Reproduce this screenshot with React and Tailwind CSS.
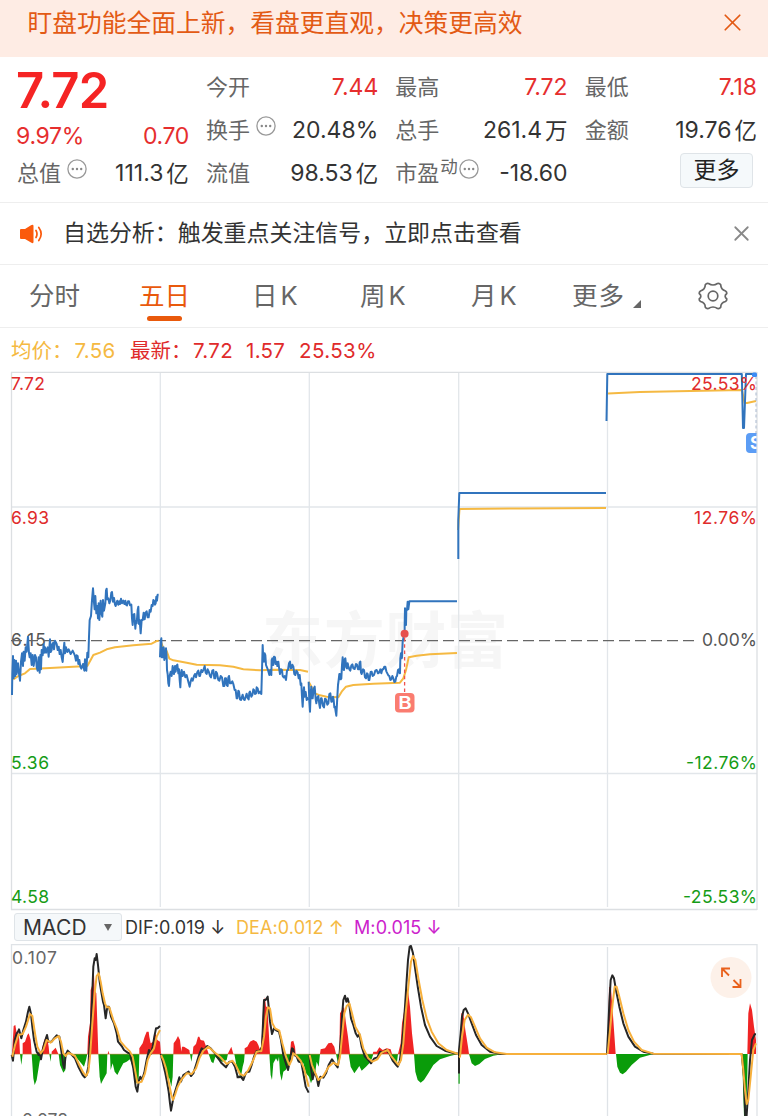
import { X } from "lucide-react";

const QUOTES = [
  [
    { label: "今开", value: "7.44", red: true },
    { label: "换手", value: "20.48%", info: true },
    { label: "流值", value: "98.53", unit: "亿" },
  ],
  [
    { label: "最高", value: "7.72", red: true },
    { label: "总手", value: "261.4", unit: "万" },
    { label: "市盈", sup: "动", value: "-18.60", info: true },
  ],
  [
    { label: "最低", value: "7.18", red: true },
    { label: "金额", value: "19.76", unit: "亿" },
  ],
];

const PRICE_LABELS = [
  { price: "7.72", rate: "25.53%", y: 389.5, color: "#e02b2b", w: 34, rw: 66 },
  { price: "6.93", rate: "12.76%", y: 523.5, color: "#e02b2b", w: 38, rw: 63 },
  { price: "6.15", rate: "0.00%", y: 646, color: "#555555", w: 35, rw: 55 },
  { price: "5.36", rate: "-12.76%", y: 768.5, color: "#169c16", w: 38, rw: 71 },
  { price: "4.58", rate: "-25.53%", y: 902.5, color: "#169c16", w: 38, rw: 74 },
];

// left: three units per pixel from x = 0, mid: from x = 220
const PRICE_LEFT = [
  "36,375 37,310 39,258 41,325 43,270 46,318 48,272 50,312 54,280 57,310 60,332 63,275 66,250 69,288 71,245 74,272 77,232 80,245 84,200 87,250 89,262 92,250 95,285 98,255 101,288 105,255 108,262 110,290 113,302 116,262 119,308 121,255 123,298 125,240 128,256 131,222 133,248 135,232 138,248 143,232 146,260 150,208 152,246 155,240 157,222 160,218 162,238 165,212 170,222 173,240 176,230 179,252 182,240 185,262 188,276 191,238 193,218 195,250 198,232 202,246 206,238 212,252 218,242 222,250 225,258 228,272 230,256 233,258 235,282 238,270 241,290 244,296 249,282 253,302 255,268 257,290 259,302 262,248 265,262 267,200 269,150 273,138 276,90 279,55 282,98 284,118 286,78 289,130 292,108 294,145 296,100 298,150 302,92 304,128 307,140 309,90 312,122 316,100 318,62 320,56 322,88 325,85 328,100 331,92 334,68 336,66 339,95 342,84 345,104 347,108 352,92 355,104 358,94 360,102 363,86 366,100 370,92 373,102 376,92 378,104 381,106 384,94 387,94 390,106 394,104 396,145 398,165 400,135 403,132 406,176 408,152 410,160 413,120 415,110 417,162 419,150 422,190 425,150 428,150 431,128 434,148 437,128 440,124 443,142 446,142 449,120 452,125 455,105 458,108 460,90 462,92 465,104 467,100 469,80 471,92 473,74 476,74",
  "480,262 482,215 484,205 485,262 487,262 489,235 491,232 493,270 495,262 498,235 500,262 501,300 503,312 505,340 507,348 509,318 512,305 515,318 518,288 520,308 522,312 525,288 527,305 529,288 532,284 535,310 537,298 539,330 541,352 543,310 545,300 548,318 552,305 556,322 560,315 565,335 569,350 572,334 575,325 578,332 582,318 585,312 588,322 592,306 595,302 598,318 600,318 604,300 607,306 611,298 614,288 617,308 620,312 623,298 626,304 630,318 633,322 637,302 640,300 643,325 646,325 648,305 651,310 655,330 658,332 662,318 666,322 670,348 673,348 675,325 678,325 680,345 683,348 685,322 687,318 690,340 693,340 697,334 700,342 704,360 707,360 710,385 712,385 715,362 717,365 720,388 723,390 728,374 731,388 734,390 740,371 743,384 746,388 748,368 750,365 754,380 757,375 760,358 762,360 765,372 768,370 770,352 773,355 776,370 780,365 784,372 786,300 788,225 790,268 792,275 794,250 796,255 798,285 800,290 804,300 808,315 811,300 814,315 815,270 817,265 820,285 822,260 825,262 827,282 830,275 832,288 835,275 838,300 840,312 843,298 846,300 848,318 851,322 854,318 858,330 861,302 864,300 867,280 870,275 872,295 874,295 877,284 880,290 883,312 886,315 889,302 893,308 896,325 899,315 902,345 904,340 906,380 908,410 910,372 912,352 914,380 917,366 920,390 922,384 925,390",
];
const PRICE_MID =
  "266,335 268,395 270,425 272,370 274,350 276,385 278,385 281,356 284,350 287,388 289,400 292,382 295,378 298,404 300,414 303,385 305,385 309,408 312,412 315,386 318,388 322,404 325,400 328,372 331,370 334,395 336,395 339,380 341,390 343,412 345,410 347,425 349,437 351,400 352,380 354,345 356,330 358,312 360,312 362,328 364,325 366,285 368,262 370,298 372,300 374,268 376,265 379,292 381,295 383,280 385,288 388,298 391,302 394,286 397,283 400,295 404,297 408,282 411,284 414,298 417,298 419,278 421,275 423,308 425,312 429,298 432,300 435,322 438,325 441,310 443,312 446,330 448,330 452,306 455,305 458,318 462,315 466,302 470,300 474,310 477,308 481,298 484,310 487,298 490,298 493,290 496,290 499,304 502,310 505,316 508,318 511,330 514,328 517,318 520,325 523,336 526,335 529,320 531,318 534,300 536,298 539,310 540,310 541,265 543,250 545,265 546,262 548,215 550,205 554,190 554,165 555,115 556,160 558,165 559,118 561,120 563,95 565,118 568,94 711,94";
const AVG_LEFT = [
  "40,328 55,318 75,310 90,297 150,294 262,288 272,270 280,255 300,248 320,238 345,232 400,226 455,221 468,214 476,212",
  "483,215 490,235 500,243 508,266 520,271 560,278 590,284 660,286 700,290 730,298 780,301 820,299 900,300 924,305",
];
const AVG_MID =
  "266,335 275,352 285,370 300,376 320,380 355,382 365,365 378,350 400,345 460,341 540,338 550,325 558,300 566,262 590,257 630,253 711,249";

const MACD = [
  {
    x: 0,
    green:
      "60,492 64,525 68,492 95,492 100,565 104,585 110,570 118,520 122,500 124,492 148,492 152,515 154,492 176,492 180,525 190,548 196,540 199,492 220,492 240,515 252,530 258,510 262,492 295,492 299,560 303,582 309,570 320,550 322,492 330,492 332,540 338,520 344,545 352,555 362,535 370,520 380,515 390,508 398,530 404,570 410,580 416,570 418,492 484,492 492,520 500,560 508,565 514,590 518,560 520,492 570,492 574,515 578,492 626,492 634,515 640,520 646,500 655,510 668,515 680,510 684,492 703,492 710,530 716,550 722,565 728,530 732,515 734,492",
    red: "36,492 41,408 46,405 50,430 56,430 58,450 60,492 68,492 68,460 75,455 82,435 86,430 92,450 95,492 124,492 126,475 133,450 140,435 146,470 148,492 155,492 155,485 167,473 175,492 262,492 264,440 270,400 272,300 277,285 281,232 284,300 289,310 293,430 295,492 323,492 325,482 328,492 418,492 418,475 428,460 434,440 440,425 446,425 448,440 452,460 460,455 466,430 472,450 480,455 483,492 520,492 521,460 528,450 534,438 540,450 544,485 546,470 552,470 568,480 570,492 578,492 580,470 588,462 594,440 598,440 602,450 612,452 624,485 626,492 683,492 694,470 700,492",
    dif: [
      "35,495 39,512 44,450 50,430 54,425 57,418 64,445 70,420 78,395 84,365 88,350 93,372 97,410 102,450 110,485 116,495 119,485 123,508 128,480 133,460 141,435 145,455 155,455 162,445 170,436 178,440 185,490 190,525 193,535 197,495 203,482 213,492 225,505 235,530 248,555 254,562 260,555 265,530 268,480 272,420 276,330 280,230 284,205 287,210 290,192 294,225 299,275 303,300 309,335 312,345 317,385 322,350 327,350 333,380 342,400 350,430 354,455 365,468 372,480 383,488 390,490 400,535 407,590 412,605 416,575 421,560 426,570 433,548 440,510 447,480 452,492 458,470 463,440 468,415 473,415 480,408",
      "482,492 488,515 495,545 500,570 506,605 510,640 513,662 517,640 522,615 530,590 538,562 543,575 550,555 558,550 566,545 573,558 580,550 588,525 597,495 605,475 612,480 622,468 632,475 645,490 655,505 665,520 678,532 688,515 697,515 705,530 713,560 722,560 730,570",
    ],
    dea: [
      "37,500 45,465 55,435 68,432 78,410 90,372 97,378 105,430 112,470 122,490 130,480 140,450 152,458 165,445 176,438 183,455 190,490 197,498 205,488 225,498 238,525 250,548 258,558 265,545 270,500 277,400 285,300 290,258 296,250 302,275 308,310 315,340 320,352 328,352 340,390 350,415 362,455 375,470 390,485 398,500 406,545 412,578 425,575 435,550 443,510 452,490 462,475 470,440 480,420",
      "483,495 490,510 498,535 506,575 514,615 519,630 525,615 533,590 545,568 560,550 575,552 588,535 598,505 610,482 625,470 645,488 660,500 680,522 697,512 707,525 720,552 732,558",
    ],
  },
  {
    x: 240,
    green:
      "88,492 92,555 96,570 100,520 108,505 114,515 117,500 120,550 125,572 130,545 137,540 142,530 150,510 152,492 168,492 172,512 180,512 190,520 198,550 207,560 213,580 220,560 226,545 230,515 236,530 240,492 288,492 293,515 298,492 326,492 332,530 343,550 350,540 358,528 365,542 378,530 388,520 396,505 400,492 452,492 458,510 470,525 474,492 522,492 526,545 533,570 542,578 552,570 565,550 580,525 600,508 630,498 655,492",
    red: "14,492 14,475 22,470 30,455 40,450 50,455 55,465 62,485 66,430 70,340 75,322 78,350 82,350 86,420 90,492 150,492 153,455 160,452 165,470 167,492 240,492 242,478 255,475 265,460 275,458 283,470 288,492 298,492 300,370 306,360 312,350 318,400 324,440 330,492 398,492 400,485 410,485 418,472 428,480 440,475 452,478 456,492 474,492 482,460 486,400 493,360 500,290 505,310 510,350 516,430 523,492",
    dif: [
      "-10,562 -4,562 4,560 10,570 18,548 28,545 35,525 42,500 50,483 58,485 66,470 69,400 72,330 77,330 83,320 86,350 90,395 96,432 102,415 110,422 117,425 123,450 130,495 136,515 144,540 150,510 156,475 160,478 163,495 170,500 176,515 184,518 190,550 197,590 206,608",
      "208,495 213,535 218,568 223,545 230,562 235,588 241,560 250,563 258,550 266,525 276,508 284,520 293,532 298,500 302,450 306,380 310,330 315,317 319,335 323,325 328,345 333,385 340,405 347,430 353,440 358,432 365,470 375,500 385,510 393,520 403,505 412,502 420,485 430,487 438,480 448,490 458,512 466,522 473,530 479,515 484,480 490,420 495,350 500,270 504,210 509,170 513,168 519,190 526,240 534,295 543,350 555,405 570,440 590,468 615,482 640,489 655,491",
    ],
    dea: [
      "12,558 25,540 40,510 50,485 64,483 72,440 78,380 84,352 90,355 97,400 105,415 118,422 127,460 138,500 148,525 155,510 160,490 170,498 182,512 192,535 206,590",
      "209,495 216,525 224,545 235,570 250,558 266,530 280,518 294,525 300,500 306,440 313,370 320,348 328,340 336,370 346,410 360,435 370,475 385,505 397,515 412,508 425,488 443,480 455,500 475,525 483,510 490,460 497,370 505,290 513,215 519,198 526,210 535,265 547,330 560,385 575,425 595,460 620,480 655,492",
    ],
  },
  {
    x: 440,
    green:
      "55.5,492 55.5,581 59,581 59,492 87,492 95,520 105,528 118,522 135,507 160,497 190,492 528,492 532,530 540,548 548,553 558,545 575,525 600,503 640,492 906,492 912,678 918,678 922,560 923,492",
    red: "60,492 64,370 70,370 76,420 84,470 87,492 504,492 507,290 513,295 520,390 527,492 922,492 925,370 930,340 936,360 942,410 948,450 948,492",
    dif: [
      "57,492 57,548 57,480 62,430 66,380 71,360 77,355 84,370 95,400 108,435 125,465 150,485 180,491 200,492 500,492",
      "501,492 504,430 508,340 512,270 517,256 522,265 528,300 538,350 550,400 565,440 585,470 610,485 640,491 905,492 912,560 916,690 919,690 925,600 930,510 936,450 944,433 948,433",
    ],
    dea: [
      "57,502 60,500 66,440 74,390 84,374 93,382 105,410 120,445 140,473 165,487 200,492 500,492",
      "503,492 510,420 518,340 524,290 530,290 538,320 550,370 565,420 582,455 605,480 640,491 905,492 910,540 915,600 920,642 925,630 932,560 940,480 948,460",
    ],
  },
];

function Line({ points, color, width = 2 }) {
  return (
    <polyline points={points} fill="none" stroke={color} strokeWidth={width}
      strokeLinejoin="round" vectorEffect="non-scaling-stroke" />
  );
}

function InfoDots({ className }) {
  return (
    <svg viewBox="0 0 20 20" className={`w-5 h-5 shrink-0 ${className}`}>
      <circle cx="10" cy="10" r="9.1" fill="none" stroke="#999" strokeWidth="1.3" />
      <circle cx="5.8" cy="10" r="1.2" fill="#888" />
      <circle cx="10" cy="10" r="1.2" fill="#888" />
      <circle cx="14.2" cy="10" r="1.2" fill="#888" />
    </svg>
  );
}

function Quote({ item }) {
  return (
    <div className="h-[43px] flex items-center justify-between whitespace-nowrap">
      <div className="flex items-center text-[22px] text-[#666]">
        {item.label}
        {item.sup && <span className="ml-px text-[17.5px] leading-none -mt-3.5">{item.sup}</span>}
        {item.info && <InfoDots className={item.sup ? "ml-px -mt-2.5" : "ml-1.5 -mt-2.5"} />}
      </div>
      <div className={`flex items-center gap-[3px] -mr-px text-[23px] ${item.red ? "text-[#e62e2e]" : "text-[#333]"}`}>
        {item.value}
        {item.unit && <span className="text-[22.5px]">{item.unit}</span>}
      </div>
    </div>
  );
}

function PriceChart() {
  return (
    <svg viewBox="0 371 768 540" className="block w-[768px] h-[540px]">
      <text x="262" y="663" textLength="246" fontSize="61" fontWeight="700" fill="#f6f6f6">东方财富</text>
      <g stroke="#e2e6ea" strokeWidth="1.3">
        <path d="M11 507H757M11 773.5H757M160.3 373V907M309.3 373V907M458.7 373V907M607.5 373V907" />
        <path d="M11.5 372V910M757 372V910M11 372.3H757M11 909.5H757" stroke="#dcdfe2" />
      </g>
      {PRICE_LABELS.map((l) => (
        <text key={l.y} x="11" y={l.y} textLength={l.w} fontSize="17.5" fill={l.color}>{l.price}</text>
      ))}
      <path d="M11 640.7H699" stroke="#666" strokeWidth="1.3" strokeDasharray="11 5" />
      <g transform="translate(0 570) scale(.33333)">
        {AVG_LEFT.map((p) => <Line key={p} points={p} color="#f5b942" />)}
        {PRICE_LEFT.map((p) => <Line key={p} points={p} color="#3174bd" />)}
      </g>
      <g transform="translate(220 570) scale(.33333)">
        <Line points={AVG_MID} color="#f5b942" />
        <Line points={PRICE_MID} color="#3174bd" />
      </g>
      <Line points="458,530 459.5,509 520,508.4 606,508" color="#f5b942" />
      <Line points="458.3,559 458.3,520 459.3,493 606,493" color="#3174bd" />
      <Line points="608,393.5 640,392 690,391 742,390 744.5,403 747,403 756,401" color="#f5b942" />
      <Line points="606.5,421 607.3,374 741.8,374 743,428 744,428 746,374 756,374" color="#3174bd" />
      <path d="M756 376V436" stroke="#a9b8ce" strokeDasharray="3 2.5" />
      <rect x="752" y="372.5" width="5" height="4.5" rx="1.5" fill="#3c8cf5" />
      <svg x="746" y="432" width="10.5" height="22" viewBox="0 0 10.5 22">
        <rect y="1" width="20" height="20" rx="4" fill="#5c9df5" />
        <text x="4" y="17" fontSize="17" fontWeight="700" fill="#fff">S</text>
      </svg>
      <path d="M404.6 638V692" stroke="#f0524f" strokeWidth="1.3" strokeDasharray="3.5 2.8" />
      <circle cx="404.6" cy="633.7" r="4" fill="#e6504e" />
      <rect x="395" y="693" width="19.5" height="19.5" rx="4" fill="#fa7c70" />
      <text x="398.3" y="709" textLength="13.5" lengthAdjust="spacingAndGlyphs" fontSize="17.5" fontWeight="600" fill="#fff">B</text>
      {PRICE_LABELS.map((l) => (
        <text key={l.y} x={757 - l.rw} y={l.y} textLength={l.rw} fontSize="17.5" fill={l.color}>{l.rate}</text>
      ))}
    </svg>
  );
}

function MacdChart() {
  return (
    <svg viewBox="0 944 768 172" className="block w-[768px] h-[172px]">
      <path d="M11 944.7H757M11.5 944V1116M757 944V1116M160.3 947V1116M309.3 947V1116M458.7 947V1116M607.5 947V1116"
        stroke="#dfe3e7" strokeWidth="1.3" />
      {MACD.map((m) => (
        <g key={m.x} transform={`translate(${m.x} 890) scale(.33333)`}>
          <polygon points={m.green} fill="#0a9c0a" />
          <polygon points={m.red} fill="#f02424" />
        </g>
      ))}
      <path d="M11 1054.2H606" stroke="#c98a3a" strokeWidth=".6" />
      {MACD.map((m) => (
        <g key={m.x} transform={`translate(${m.x} 890) scale(.33333)`}>
          {m.dif.map((p) => <Line key={p} points={p} color="#262626" />)}
          {m.dea.map((p) => <Line key={p} points={p} color="#f7b03c" />)}
        </g>
      ))}
      <g fontSize="17.5" fill="#666">
        <text x="12" y="964" textLength="45">0.107</text>
        <text x="14" y="1125.5" textLength="54">-0.078</text>
      </g>
      <circle cx="731" cy="977.5" r="20.5" fill="#fdf1e9" />
      <path d="M722 977V968.5H730M722.5 969L729 975.5M740.5 979V987H732.5M740 986.5L733.5 980"
        fill="none" stroke="#e9611c" strokeWidth="1.8" />
    </svg>
  );
}

export default function App() {
  return (
    <div className="w-[768px] h-[1116px] overflow-hidden bg-white text-[#333] font-['Inter','Noto_Sans_CJK_SC',sans-serif]">
      {/* Promo banner */}
      <div className="h-[57px] pl-[27.5px] pr-[24px] pb-[11px] flex items-center justify-between bg-[#feece4] text-[#e35a14]">
        <span className="text-[24.75px] leading-none">盯盘功能全面上新，看盘更直观，决策更高效</span>
        <X size={29} strokeWidth={1.4} className="-mr-[3px] -mt-px" />
      </div>

      {/* Quote summary */}
      <div className="h-[146px] pt-[9px] pl-[17px] pr-3 flex gap-[18px] border-b border-[#eee]">
        <div className="w-[171px]">
          <div className="h-[51px] -ml-px text-[49px] leading-[49px] font-semibold text-[#f52424] tracking-[-0.7px]">7.72</div>
          <div className="h-[37px] flex justify-between items-center pt-0.5 text-[23px] text-[#e62e2e]">
            <span className="-ml-px tracking-[-0.3px]">9.97%</span>
            <span className="-mr-px tracking-[-0.4px]">0.70</span>
          </div>
          <div className="-mt-0.5">
            <Quote item={{ label: "总值", value: "111.3", unit: "亿", info: true }} />
          </div>
        </div>
        {QUOTES.map((col) => (
          <div key={col[0].label} className="w-[171.5px]">
            {col.map((item) => <Quote key={item.label} item={item} />)}
            {col.length === 2 && (
              <button className="block ml-auto mr-[3px] mt-px w-[73px] h-[35px] rounded-[4px] border border-[#dfe4e8] bg-[#f5f9fb] text-[23px] leading-[33px] text-[#222]">
                更多
              </button>
            )}
          </div>
        ))}
      </div>

      {/* Notice */}
      <div className="h-[62px] px-5 flex items-center border-b border-[#eee]">
        <svg viewBox="0 0 24 20" className="w-6 h-5">
          <path d="M0 6Q0 5 1 5H5L11 1.2Q13.500 0 13.500 2V18Q13.500 20 11 18.500L5 15H1Q0 15 0 14Z" fill="#fb5a0c" />
          <path d="M16 6.500Q18 10 16 13.500M18.800 3.500Q23.500 10 18.800 16.500" fill="none" stroke="#fb5a0c" strokeWidth="1.7" strokeLinecap="round" />
        </svg>
        <span className="ml-[19px] text-[22.95px]">自选分析：触发重点关注信号，立即点击查看</span>
        <X size={25} strokeWidth={1.7} className="ml-auto -mr-[6px] text-[#888]" />
      </div>

      {/* Period tabs */}
      <div className="h-[63px] pl-[29px] flex items-center border-b border-[#eee] text-[25.5px] text-[#666] whitespace-nowrap">
        <span className="w-[110px]">分时</span>
        <span className="w-[113px] relative text-[#e9590c]">
          五日
          <i className="absolute left-[8px] top-[39px] w-[35px] h-[5.5px] rounded-full bg-[#e9590c]" />
        </span>
        <span className="w-[108px] flex gap-[3px]">日<span>K</span></span>
        <span className="w-[111px] flex gap-[3px]">周<span>K</span></span>
        <span className="w-[101px] flex gap-[3px]">月<span>K</span></span>
        <span className="w-[61px] tracking-[1px]">更多</span>
        <svg viewBox="0 0 8 8" className="w-2 h-2 mt-4">
          <path d="M8 0V8H0Z" fill="#666" />
        </svg>
        <svg viewBox="0 0 30 28" className="ml-[57px] w-[30px] h-[28px]" fill="none" stroke="#666" strokeWidth="1.7" strokeLinejoin="round">
          <path d="M10.500 1.500Q15 4.500 19.500 1.500Q21.500 1 22.700 2.800Q22.800 7.500 27.500 9Q29 10 28.800 11.500Q25.500 14 28.800 17Q29 18.500 27.500 19.500Q22.800 20.500 22.700 25.200Q21.500 27 19.500 26.500Q15 23.500 10.500 26.500Q8.500 27 7.300 25.200Q7.200 20.500 2.500 19.500Q1 18.500 1.200 17Q4.500 14 1.200 11.500Q1 10 2.500 9Q7.200 7.500 7.300 2.800Q8.500 1 10.500 1.500Z" />
          <circle cx="15" cy="14" r="4.800" />
        </svg>
      </div>

      {/* Latest values */}
      <div className="h-[43px] pt-[3px] pl-[11px] flex items-center text-[20.5px] text-[#e02b2b] whitespace-pre">
        <span className="w-[63.5px] text-[#f5b942]">均价：</span>
        <span className="w-[55.5px] tracking-[0.3px] text-[#f5b942]">7.56</span>
        <span className="w-[63px]">最新：</span>
        <span className="w-[53px] tracking-[0.3px]">7.72</span>
        <span className="w-[53px] tracking-[0.3px]">1.57</span>
        <span className="tracking-[0.4px]">25.53%</span>
      </div>

      <PriceChart />

      {/* Indicator bar */}
      <div className="h-[33px] pl-[14px] flex items-center text-[18px] tracking-[0.1px] whitespace-nowrap">
        <button className="w-[108px] h-[28px] -mt-px pl-[8px] pr-[9px] flex items-center justify-between rounded-[3px] border border-[#dfe4e8] bg-[#f5f8fa] text-[21px] leading-none text-[#333]">
          MACD
          <svg viewBox="0 0 8 7" className="w-2 h-[7px]"><path d="M0 0H8L4 7Z" fill="#666" /></svg>
        </button>
        <span className="ml-[3px] w-[111px]">DIF:0.019 ↓</span>
        <span className="w-[118px] text-[#f5b942]">DEA:0.012 ↑</span>
        <span className="text-[#cc22cc]">M:0.015 ↓</span>
      </div>

      <MacdChart />
    </div>
  );
}
